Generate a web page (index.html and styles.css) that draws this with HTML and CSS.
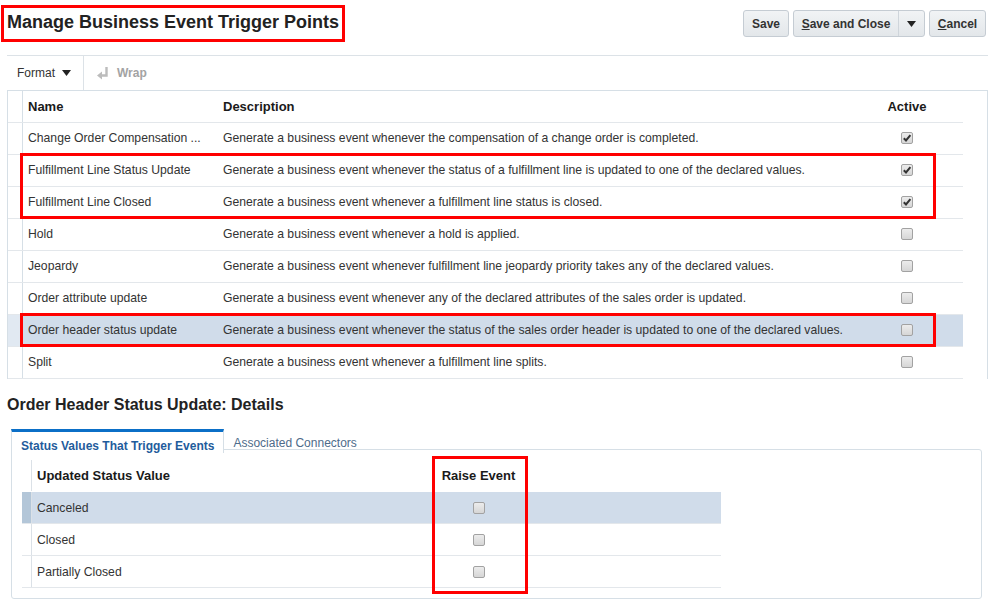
FILE: index.html
```html
<!DOCTYPE html>
<html>
<head>
<meta charset="utf-8">
<link rel="stylesheet" href="styles.css">
</head>
<body>
<header class="top">
  <h1 class="title">Manage Business Event Trigger Points</h1>
  <div class="actions">
    <button class="btn btn-save">Save</button>
    <div class="split">
      <button class="split-main"><u>S</u>ave and Close</button>
      <button class="split-arrow"><svg width="9" height="6" viewBox="0 0 9 6"><polygon points="0,0 9,0 4.5,6" fill="#222"/></svg></button>
    </div>
    <button class="btn btn-cancel"><u>C</u>ancel</button>
  </div>
</header>

<div class="toolbar">
  <div class="tb-format">Format <svg width="9" height="6" viewBox="0 0 9 6"><polygon points="0,0 9,0 4.5,6" fill="#222"/></svg></div>
  <div class="tb-wrap"><svg width="12" height="14" viewBox="0 0 12 14"><path d="M9.5 1 V9.5 H4" fill="none" stroke="#bcbcbc" stroke-width="2.4"/><polygon points="0,9.5 5,5.5 5,13.5" fill="#bcbcbc"/></svg>Wrap</div>
</div>

<div class="grid">
  <div class="row head">
    <div class="cell rh"></div>
    <div class="cell c-name">Name</div>
    <div class="cell c-desc">Description</div>
    <div class="cell c-act">Active</div>
    <div class="cell"></div>
  </div>
  <div class="row">
    <div class="cell rh"></div>
    <div class="cell c-name">Change Order Compensation ...</div>
    <div class="cell c-desc">Generate a business event whenever the compensation of a change order is completed.</div>
    <div class="cell c-act"><span class="cb on"><svg width="10" height="10" viewBox="0 0 10 10"><path d="M1.8 5.2 L4 7.4 L8.4 2.2" fill="none" stroke="#333" stroke-width="2"/></svg></span></div>
    <div class="cell"></div>
  </div>
  <div class="row">
    <div class="cell rh"></div>
    <div class="cell c-name">Fulfillment Line Status Update</div>
    <div class="cell c-desc">Generate a business event whenever the status of a fulfillment line is updated to one of the declared values.</div>
    <div class="cell c-act"><span class="cb on"><svg width="10" height="10" viewBox="0 0 10 10"><path d="M1.8 5.2 L4 7.4 L8.4 2.2" fill="none" stroke="#333" stroke-width="2"/></svg></span></div>
    <div class="cell"></div>
  </div>
  <div class="row">
    <div class="cell rh"></div>
    <div class="cell c-name">Fulfillment Line Closed</div>
    <div class="cell c-desc">Generate a business event whenever a fulfillment line status is closed.</div>
    <div class="cell c-act"><span class="cb on"><svg width="10" height="10" viewBox="0 0 10 10"><path d="M1.8 5.2 L4 7.4 L8.4 2.2" fill="none" stroke="#333" stroke-width="2"/></svg></span></div>
    <div class="cell"></div>
  </div>
  <div class="row">
    <div class="cell rh"></div>
    <div class="cell c-name">Hold</div>
    <div class="cell c-desc">Generate a business event whenever a hold is applied.</div>
    <div class="cell c-act"><span class="cb"></span></div>
    <div class="cell"></div>
  </div>
  <div class="row">
    <div class="cell rh"></div>
    <div class="cell c-name">Jeopardy</div>
    <div class="cell c-desc">Generate a business event whenever fulfillment line jeopardy priority takes any of the declared values.</div>
    <div class="cell c-act"><span class="cb"></span></div>
    <div class="cell"></div>
  </div>
  <div class="row">
    <div class="cell rh"></div>
    <div class="cell c-name">Order attribute update</div>
    <div class="cell c-desc">Generate a business event whenever any of the declared attributes of the sales order is updated.</div>
    <div class="cell c-act"><span class="cb"></span></div>
    <div class="cell"></div>
  </div>
  <div class="row sel">
    <div class="cell rh"></div>
    <div class="cell c-name">Order header status update</div>
    <div class="cell c-desc">Generate a business event whenever the status of the sales order header is updated to one of the declared values.</div>
    <div class="cell c-act"><span class="cb"></span></div>
    <div class="cell"></div>
  </div>
  <div class="row">
    <div class="cell rh"></div>
    <div class="cell c-name">Split</div>
    <div class="cell c-desc">Generate a business event whenever a fulfillment line splits.</div>
    <div class="cell c-act"><span class="cb"></span></div>
    <div class="cell"></div>
  </div>
  <div class="mark mark-1"></div>
  <div class="mark mark-2"></div>
</div>

<h2 class="section">Order Header Status Update: Details</h2>

<div class="tabs">
  <div class="tab active">Status Values That Trigger Events</div>
  <div class="tab">Associated Connectors</div>
</div>
<div class="panel">
  <div class="irow ihead">
    <div class="cell irh"></div>
    <div class="cell i-val">Updated Status Value</div>
    <div class="cell i-raise">Raise Event</div>
  </div>
  <div class="irow sel">
    <div class="cell irh"></div>
    <div class="cell i-val">Canceled</div>
    <div class="cell i-raise"><span class="cb"></span></div>
  </div>
  <div class="irow">
    <div class="cell irh"></div>
    <div class="cell i-val">Closed</div>
    <div class="cell i-raise"><span class="cb"></span></div>
  </div>
  <div class="irow">
    <div class="cell irh"></div>
    <div class="cell i-val">Partially Closed</div>
    <div class="cell i-raise"><span class="cb"></span></div>
  </div>
  <div class="mark mark-3"></div>
</div>
</body>
</html>
```

FILE: styles.css
```css
* { box-sizing: border-box; }

body {
  margin: 0;
  font-family: "Liberation Sans", Arial, sans-serif;
  font-size: 12px;
  color: #333;
  background: #fff;
}

/* header */
.top {
  display: flex;
  justify-content: space-between;
  align-items: flex-start;
  padding: 5px 7px 0 1px;
}
.title {
  margin: 0;
  height: 37px;
  border: 3px solid #ff0000;
  padding: 0 3px 0 3px;
  font-size: 18px;
  line-height: 28px;
  font-weight: bold;
  color: #222;
}
.actions {
  display: flex;
  gap: 4px;
  margin-top: 5px;
}
.btn, .split {
  height: 27px;
  border: 1px solid #c5ccd3;
  border-radius: 3px;
  background: linear-gradient(#f1f3f5, #e3e7ea);
}
.btn, .split button {
  font-family: "Liberation Sans", Arial, sans-serif;
  font-size: 12px;
  font-weight: bold;
  color: #333;
  padding: 0;
}
.btn-save { width: 46px; }
.btn-cancel { width: 57px; }
.split { display: flex; width: 132px; }
.split button { background: transparent; border: 0; height: 25px; }
.split-main { width: 105px; border-right: 1px solid #cfd5db !important; }
.split-arrow { flex: 1; display: flex; align-items: center; justify-content: center; }
u { text-decoration: underline; text-underline-offset: 1px; }

/* toolbar */
.toolbar {
  display: flex;
  height: 35px;
  margin: 13px 5px 0 7px;
  border-top: 1px solid #dce2e7;
}
.tb-format {
  width: 77px;
  border-right: 1px solid #dce2e7;
  padding-left: 10px;
  display: flex;
  align-items: center;
  gap: 7px;
  color: #333;
}
.tb-wrap {
  padding-left: 13px;
  display: flex;
  align-items: center;
  gap: 8px;
  color: #a3a3a3;
  font-weight: bold;
}

/* main table */
.grid {
  position: relative;
  margin: 0 5px 0 7px;
  border: 1px solid #d6dfe6;
  border-bottom: 0;
}
.row {
  display: grid;
  grid-template-columns: 15px 194px 661px 58px 27px;
  width: 955px;
  height: 32px;
  border-bottom: 1px solid #e3e7eb;
}
.cell {
  display: flex;
  align-items: center;
  white-space: nowrap;
  overflow: hidden;
}
.row .cell { padding-bottom: 1px; }
.rh { border-right: 1px solid #d6dfe6; }
.c-name { padding-left: 5px; font-size: 12.2px; }
.c-desc { padding-left: 6px; font-size: 12.2px; }
.c-act { justify-content: center; }
.head {
  font-size: 13px;
  font-weight: bold;
  color: #1a1a1a;
}
.head .c-name, .head .c-desc { font-size: 13px; }
.row.sel .cell { background: #d0dcea; }
.row.sel .rh { background: #e1e9f2; }

.cb {
  display: inline-flex;
  align-items: center;
  justify-content: center;
  width: 12px;
  height: 12px;
  border: 1px solid #a2a2a2;
  border-radius: 2px;
  background: linear-gradient(#ececec, #d6d6d6);
}

.mark {
  position: absolute;
  border: 3px solid #ff0000;
}
.mark-1 { left: 12px; top: 62px; width: 916px; height: 66px; }
.mark-2 { left: 12px; top: 222px; width: 916px; height: 34px; }

/* details */
.section {
  margin: 16px 0 0 7px;
  font-size: 16px;
  line-height: 20px;
  font-weight: bold;
  color: #222;
}
.tabs {
  display: flex;
  margin: 14px 0 0 11px;
}
.tab {
  padding: 7px 9px 0;
  line-height: 14px;
  height: 24px;
  color: #4e6b8a;
}
.tab.active {
  position: relative;
  z-index: 1;
  background: #fff;
  border-top: 3px solid #0b6fc7;
  border-left: 1px solid #d6dfe6;
  border-right: 1px solid #d6dfe6;
  font-weight: bold;
  color: #1f5c9c;
}
.panel {
  position: relative;
  margin: -4px 11px 0 11px;
  border: 1px solid #d6dfe6;
  border-radius: 0 3px 3px 3px;
  padding: 10px 10px 10px;
}
.irow {
  display: grid;
  grid-template-columns: 10px 204px 485px;
  width: 699px;
  height: 32px;
  border-bottom: 1px solid #e3e7eb;
}
.ihead {
  font-size: 13px;
  font-weight: bold;
  color: #1a1a1a;
  border-bottom-color: #fff;
}
.irh { border-right: 1px solid #dbe1e7; }
.i-val { padding-left: 5px; font-size: 12.2px; }
.ihead .i-val { font-size: 13px; }
.i-raise { justify-content: center; }
.irow.sel .cell { background: #d0dcea; }
.irow.sel .irh { background: #b3c6d8; }

.mark-3 { left: 420px; top: 6px; width: 96px; height: 138px; }
```
